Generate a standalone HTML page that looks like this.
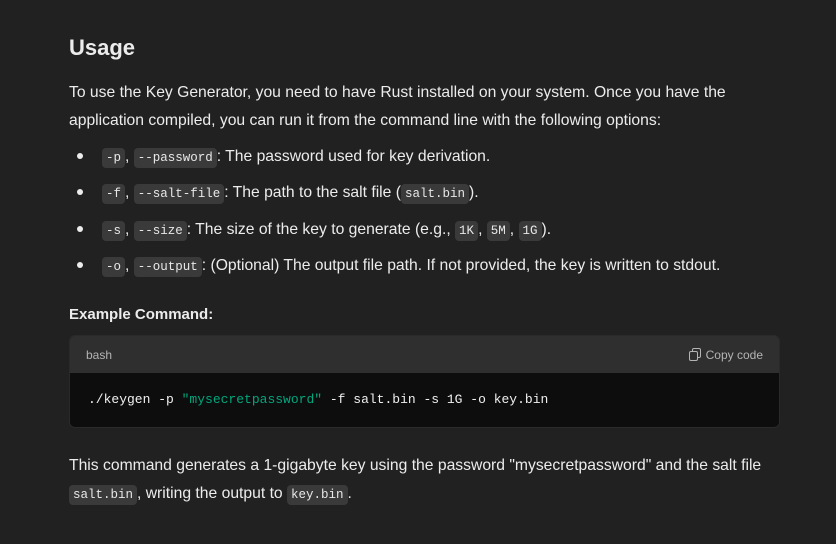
<!DOCTYPE html>
<html><head><style>
body{margin:0;background:#212121;width:836px;height:544px;overflow:hidden;font-family:"Liberation Sans",sans-serif;color:#ececec;position:relative}
.a{position:absolute;left:69px;white-space:nowrap;font-size:15.7px}
code{font-family:"Liberation Mono",monospace;font-size:12.5px;background:#3a3a3a;border-radius:4px;padding:3px 4px;color:#e8e8e8}
.li{position:absolute;left:102px;white-space:nowrap;font-size:15.7px}
.dot{position:absolute;left:77px;width:6px;height:6px;border-radius:50%;background:#ececec}
</style></head><body>
<div class="a" style="top:35px;font-size:22px;font-weight:bold">Usage</div>
<div class="a" style="top:84px">To use the Key Generator, you need to have Rust installed on your system. Once you have the</div>
<div class="a" style="top:112px">application compiled, you can run it from the command line with the following options:</div>
<div class="dot" style="top:153px"></div><div class="li" style="top:148px"><code>-p</code>, <code>--password</code>: The password used for key derivation.</div>
<div class="dot" style="top:189px"></div><div class="li" style="top:184px"><code>-f</code>, <code>--salt-file</code>: The path to the salt file (<code>salt.bin</code>).</div>
<div class="dot" style="top:226px"></div><div class="li" style="top:221px"><code>-s</code>, <code>--size</code>: The size of the key to generate (e.g., <code>1K</code>, <code>5M</code>, <code>1G</code>).</div>
<div class="dot" style="top:262px"></div><div class="li" style="top:257px"><code>-o</code>, <code>--output</code>: (Optional) The output file path. If not provided, the key is written to stdout.</div>
<div class="a" style="top:306px;font-weight:bold;font-size:15px">Example Command:</div>
<div style="position:absolute;left:69px;top:335px;width:711px;height:93px;border-radius:6px;overflow:hidden;border:1px solid #2a2a2a;box-sizing:border-box">
<div style="height:37px;background:#2f2f2f;position:relative;font-size:12px;color:#b4b4b4">
<span style="position:absolute;left:16px;top:12px">bash</span>
<span style="position:absolute;right:16px;top:12px"><svg width="12" height="13" viewBox="0 0 12 13" style="vertical-align:-2px;margin-right:5px"><rect x="3.5" y="0.5" width="8" height="9" rx="1.5" fill="none" stroke="#b4b4b4"/><rect x="0.5" y="3.5" width="8" height="9" rx="1.5" fill="#2f2f2f" stroke="#b4b4b4"/></svg>Copy code</span>
</div>
<div style="height:56px;background:#0d0d0d;font-family:'Liberation Mono',monospace;font-size:13px;color:#f0f0f0;padding:19px 0 0 18px;box-sizing:border-box;white-space:pre">./keygen -p <span style="color:#00a67d">"mysecretpassword"</span> -f salt.bin -s 1G -o key.bin</div>
</div>
<div class="a" style="top:457px">This command generates a 1-gigabyte key using the password "mysecretpassword" and the salt file</div>
<div class="a" style="top:485px"><code>salt.bin</code>, writing the output to <code>key.bin</code>.</div>
</body></html>
